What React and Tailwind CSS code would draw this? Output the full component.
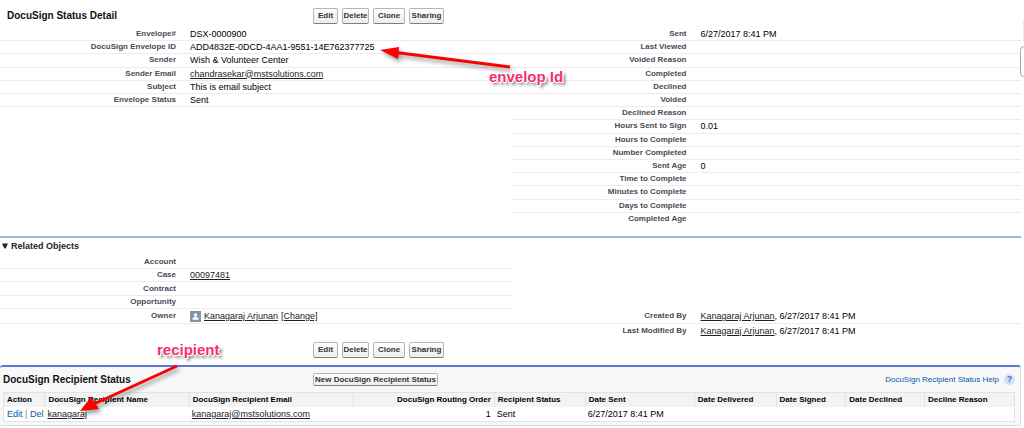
const leftFields = [
  ['Envelope#', 'DSX-0000900'],
  ['DocuSign Envelope ID', 'ADD4832E-0DCD-4AA1-9551-14E762377725'],
  ['Sender', 'Wish & Volunteer Center'],
  ['Sender Email', <TextLink>chandrasekar@mstsolutions.com</TextLink>],
  ['Subject', 'This is email subject'],
  ['Envelope Status', 'Sent'],
];

const rightFields = [
  ['Sent', '6/27/2017 8:41 PM'],
  ['Last Viewed', ''],
  ['Voided Reason', ''],
  ['Completed', ''],
  ['Declined', ''],
  ['Voided', ''],
  ['Declined Reason', ''],
  ['Hours Sent to Sign', '0.01'],
  ['Hours to Complete', ''],
  ['Number Completed', ''],
  ['Sent Age', '0'],
  ['Time to Complete', ''],
  ['Minutes to Complete', ''],
  ['Days to Complete', ''],
  ['Completed Age', ''],
];

const columns = [
  ['Action', 'w-[4%]'],
  ['DocuSign Recipient Name', 'w-[14.3%]'],
  ['DocuSign Recipient Email', 'w-[16.3%]'],
  ['DocuSign Routing Order', 'w-[13.9%]'],
  ['Recipient Status', 'w-[9%]'],
  ['Date Sent', 'w-[10.8%]'],
  ['Date Delivered', 'w-[8.1%]'],
  ['Date Signed', 'w-[6.9%]'],
  ['Date Declined', 'w-[7.8%]'],
  ['Decline Reason', 'w-[8.9%]'],
];

function TextLink({ children }) {
  return (
    <a href="#" className="text-[#222] underline">
      {children}
    </a>
  );
}

function Field({ label, children, className = '' }) {
  return (
    <div className={`flex items-center gap-[14px] whitespace-nowrap border-b leading-[12px] ${className}`}>
      <dt className="w-[176px] shrink-0 text-right text-[8px] font-bold text-[#4a4a56]">{label}</dt>
      <dd className="text-[9px] text-black">{children}</dd>
    </div>
  );
}

function ActionButton({ children, className }) {
  return (
    <button
      type="button"
      className={`whitespace-nowrap rounded-[2px] border border-[#b5b5b5] border-b-[#7f7f7f] bg-linear-to-b from-white to-[#ededed] text-center text-[8px] font-bold text-[#333] ${className}`}
    >
      {children}
    </button>
  );
}

function RecordActions() {
  return (
    <div className="flex gap-1">
      <ActionButton className="h-4 w-[25px]">Edit</ActionButton>
      <ActionButton className="h-4 w-[27px]">Delete</ActionButton>
      <ActionButton className="h-4 w-[32px]">Clone</ActionButton>
      <ActionButton className="h-4 w-[35px]">Sharing</ActionButton>
    </div>
  );
}

function Note({ children, className }) {
  return (
    <div
      className={`absolute whitespace-nowrap text-[15px] font-bold leading-[18px] text-[#f5306e] [text-shadow:1px_0_#fff,-1px_0_#fff,0_1px_#fff,0_-1px_#fff,1px_1px_#fff,-1px_-1px_#fff,3px_3px_3px_#777] ${className}`}
    >
      {children}
    </div>
  );
}

function Arrow({ line, head, className, box }) {
  return (
    <svg
      aria-hidden="true"
      viewBox={box}
      className={`pointer-events-none absolute overflow-visible drop-shadow-[2px_3px_2px_rgba(0,0,0,0.4)] ${className}`}
    >
      <path d={line} stroke="#fb0000" strokeWidth="3" fill="none" />
      <path d={head} fill="#fb0000" />
    </svg>
  );
}

export default function App() {
  return (
    <div className="relative overflow-hidden bg-white pb-[2px] pr-[3px] font-['Liberation_Sans',Arial,sans-serif] text-black">
      <header className="flex h-[28px] items-center pt-[3px]">
        <h1 className="w-[313px] pl-[7px] text-[10px] font-bold leading-[14px] text-[#111]">DocuSign Status Detail</h1>
        <RecordActions />
      </header>

      <dl className="grid h-[198px] grid-flow-col grid-cols-2 grid-rows-[repeat(15,1fr)]">
        {leftFields.map(([label, value]) => (
          <Field key={label} label={label} className="border-[#ececec]">
            {value}
          </Field>
        ))}
        <div className="row-span-9" />
        {rightFields.map(([label, value]) => (
          <Field key={label} label={label} className="border-[#ececec] last:border-transparent">
            {value}
          </Field>
        ))}
      </dl>

      <section className="mt-[10px] border-t-2 border-[#a3b8e0]">
        <h2 className="flex h-[17px] items-center gap-[3px] pb-[2px] pl-[2px] text-[9px] font-bold leading-[12px] text-[#222]">
          <svg viewBox="0 0 6 6" className="size-[6px]" aria-hidden="true">
            <path d="M0 0.5h6L3.6 5.5H2.4z" fill="#222" />
          </svg>
          Related Objects
        </h2>
        <dl className="grid grid-flow-col grid-cols-2 grid-rows-[14px_13px_14px_13px_15px_14px]">
          <Field label="Account" className="border-[#ececec]" />
          <Field label="Case" className="border-[#ececec]">
            <TextLink>00097481</TextLink>
          </Field>
          <Field label="Contract" className="border-[#ececec]" />
          <Field label="Opportunity" className="border-[#ececec]" />
          <Field label="Owner" className="border-[#ececec]">
            <span className="flex items-center gap-[3px]">
              <svg viewBox="0 0 11 11" className="size-[11px]" aria-hidden="true">
                <rect width="11" height="11" fill="#7f96ab" />
                <circle cx="5.5" cy="4" r="1.7" fill="#fff" />
                <path d="M2.5 8.7V7.4Q3 6.2 4.4 6h2.2Q8 6.2 8.5 7.4v1.3z" fill="#fff" />
              </svg>
              <TextLink>Kanagaraj Arjunan</TextLink>
              <TextLink>[Change]</TextLink>
            </span>
          </Field>
          <div />
          <div className="row-span-4" />
          <Field label="Created By" className="border-[#ececec]">
            <TextLink>Kanagaraj Arjunan</TextLink>, 6/27/2017 8:41 PM
          </Field>
          <Field label="Last Modified By" className="border-transparent">
            <TextLink>Kanagaraj Arjunan</TextLink>, 6/27/2017 8:41 PM
          </Field>
        </dl>
      </section>

      <div className="flex pb-[7px] pl-[313px] pt-[4px]">
        <RecordActions />
      </div>

      <section className="rounded-[3px] border border-l-0 border-[#dcdfe0] border-t-2 border-t-[#5c78d2] bg-[#f8f8f8] pb-[3px] pl-[3px] pr-[5px]">
        <div className="flex h-[25px] items-center">
          <h2 className="w-[310px] text-[10px] font-bold leading-[14px] text-[#111]">DocuSign Recipient Status</h2>
          <ActionButton className="h-[13px] px-[1px] leading-[10px]">New DocuSign Recipient Status</ActionButton>
          <a href="#" className="ml-auto flex items-center gap-[5px] text-[8px] text-[#015ba7]">
            DocuSign Recipient Status Help
            <span className="flex size-[11px] items-center justify-center rounded-full bg-[#d3e3f3] text-[9px] font-bold leading-none text-[#2a6fc0]">
              ?
            </span>
          </a>
        </div>
        <table className="w-full table-fixed border-separate border-spacing-0 whitespace-nowrap border border-[#e0e3e5] bg-white text-left leading-[12px]">
          <thead>
            <tr className="h-[14px] bg-[#f2f3f3] text-[8px]">
              {columns.map(([name, width], i) => (
                <th
                  key={name}
                  scope="col"
                  className={`border-[#e0e3e5] px-[3px] font-bold not-first:border-l ${width} ${i === 3 ? 'text-right' : ''}`}
                >
                  {name}
                </th>
              ))}
            </tr>
          </thead>
          <tbody>
            <tr className="h-[14px] text-[9px]">
              <td className="pl-[3px] text-[#015ba7]">
                <a href="#">Edit</a> <span className="text-[#888]">|</span> <a href="#">Del</a>
              </td>
              <td className="px-[3px]">
                <TextLink>kanagaraj</TextLink>
              </td>
              <td className="px-[3px]">
                <TextLink>kanagaraj@mstsolutions.com</TextLink>
              </td>
              <td className="px-[3px] text-right">1</td>
              <td className="px-[3px]">Sent</td>
              <td className="px-[3px]">6/27/2017 8:41 PM</td>
              <td />
              <td />
              <td />
              <td />
            </tr>
          </tbody>
        </table>
      </section>

      <Arrow
        className="left-[380px] top-[46px] h-[24px] w-[131px]"
        box="0 0 131 24"
        line="M16 6.500L130 21"
        head="M0 4L19 1L18 13z"
      />
      <Note className="left-[489px] top-[68px]">envelop Id</Note>
      <Arrow
        className="left-[80px] top-[365px] h-[47px] w-[98px]"
        box="0 0 98 47"
        line="M14 39L97 1"
        head="M0 46L11 32L19 44z"
      />
      <Note className="left-[157px] top-[341px]">recipient</Note>

      <div className="absolute -right-[4px] top-[46px] h-[31px] w-[8px] rounded-[4px] border border-[#a3a9b0] bg-white" />
      <div className="absolute right-0 top-[20px] h-[22px] w-px bg-[#ececec]" />
    </div>
  );
}
